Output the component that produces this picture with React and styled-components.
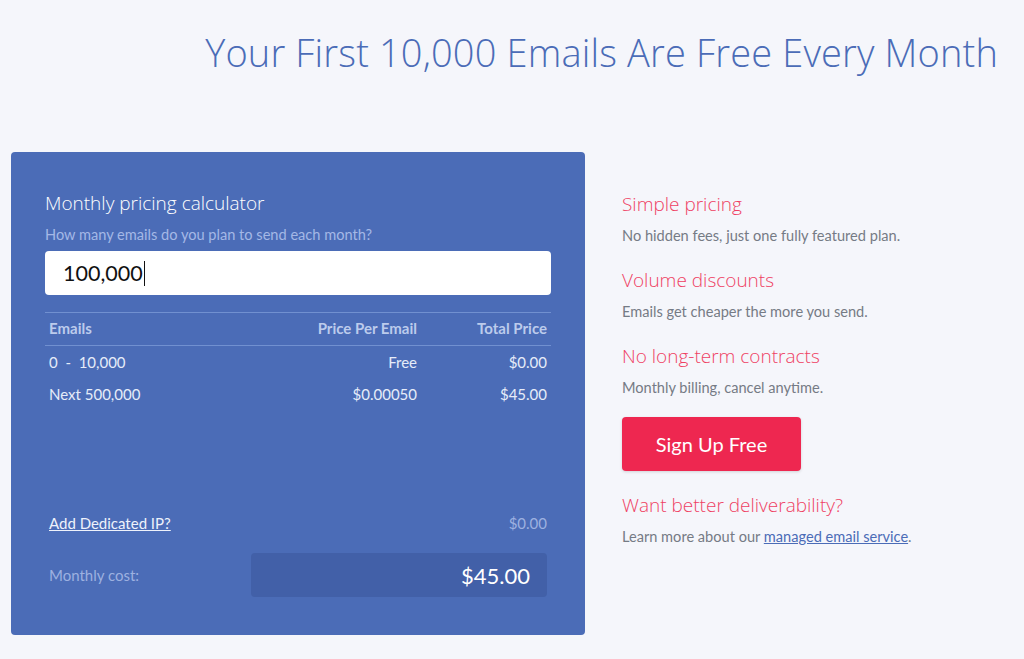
import React from "react";
import styled, { createGlobalStyle } from "styled-components";

const GlobalStyle = createGlobalStyle`
  body {
    margin: 0;
    background: #f5f6fb;
    font-family: "Lato", "Liberation Sans", sans-serif;
  }
`;

const rows = [
  { emails: "0  -  10,000", per: "Free", total: "$0.00" },
  { emails: "Next 500,000", per: "$0.00050", total: "$45.00" },
];

const features = [
  { title: "Simple pricing", text: "No hidden fees, just one fully featured plan." },
  { title: "Volume discounts", text: "Emails get cheaper the more you send." },
  { title: "No long-term contracts", text: "Monthly billing, cancel anytime." },
];

const App = () => {
  return (
    <Page>
      <GlobalStyle />
      <Title>Your First 10,000 Emails Are Free Every Month</Title>
      <Content>
        <Card>
          <CardTitle>Monthly pricing calculator</CardTitle>
          <Hint>How many emails do you plan to send each month?</Hint>
          <InputBox>
            100,000<Caret />
          </InputBox>
          <Table>
            <HeadCell>Emails</HeadCell>
            <HeadCell right>Price Per Email</HeadCell>
            <HeadCell right>Total Price</HeadCell>
            {rows.map((row, idx) => (
              <React.Fragment key={`row${idx}`}>
                <Cell>{row.emails}</Cell>
                <Cell right>{row.per}</Cell>
                <Cell right>{row.total}</Cell>
              </React.Fragment>
            ))}
          </Table>
          <Footer>
            <ExtraRow>
              <DedicatedLink href="#">Add Dedicated IP?</DedicatedLink>
              <Muted>$0.00</Muted>
            </ExtraRow>
            <CostRow>
              <Muted>Monthly cost:</Muted>
              <CostBox>$45.00</CostBox>
            </CostRow>
          </Footer>
        </Card>
        <Side>
          {features.map((f, idx) => (
            <Feature key={`f${idx}`}>
              <FeatureTitle>{f.title}</FeatureTitle>
              <FeatureText>{f.text}</FeatureText>
            </Feature>
          ))}
          <SignUp>Sign Up Free</SignUp>
          <Feature>
            <FeatureTitle>Want better deliverability?</FeatureTitle>
            <FeatureText>
              Learn more about our <TextLink href="#">managed email service</TextLink>.
            </FeatureText>
          </Feature>
        </Side>
      </Content>
    </Page>
  );
};

const Page = styled.div`
  width: 1024px;
  min-height: 659px;
  padding-top: 30px;
  box-sizing: border-box;
`;

const Title = styled.h1`
  margin: 0;
  padding-right: 26px;
  text-align: right;
  font-family: "Open Sans", sans-serif;
  font-weight: 300;
  font-size: 38px;
  line-height: 44px;
  letter-spacing: 0.15px;
  color: #4b6cb7;
`;

const Content = styled.div`
  display: flex;
  margin-top: 78px;
  padding-left: 11px;
`;

const Card = styled.div`
  width: 574px;
  height: 483px;
  box-sizing: border-box;
  padding: 38px 34px 38px 34px;
  background: #4b6cb7;
  border-radius: 4px;
  display: flex;
  flex-direction: column;
`;

const CardTitle = styled.div`
  font-family: "Open Sans", sans-serif;
  font-weight: 300;
  font-size: 19px;
  line-height: 26px;
  color: #ffffff;
`;

const Hint = styled.div`
  margin-top: 10px;
  font-size: 14.6px;
  line-height: 18px;
  color: #a4b8e6;
`;

const InputBox = styled.div`
  margin-top: 7px;
  height: 44px;
  background: #ffffff;
  border-radius: 4px;
  display: flex;
  align-items: center;
  padding-left: 18px;
  font-size: 21.5px;
  color: #111;
`;

const Caret = styled.span`
  display: inline-block;
  width: 1px;
  height: 25px;
  background: #111;
  margin-left: 1px;
`;

const Table = styled.div`
  margin-top: 17px;
  display: grid;
  grid-template-columns: 1fr 220px 130px;
  border-top: 1px solid #7190d0;
`;

const HeadCell = styled.div`
  padding: 6px 4px 7px;
  font-size: 15px;
  font-weight: 700;
  line-height: 19px;
  color: #bccbec;
  text-align: ${(props) => (props.right ? "right" : "left")};
  border-bottom: 1px solid #7190d0;
`;

const Cell = styled.div`
  padding: 6px 4px 6px;
  font-size: 15px;
  line-height: 20px;
  color: #e6ecf9;
  white-space: pre;
  text-align: ${(props) => (props.right ? "right" : "left")};
`;

const Footer = styled.div`
  margin-top: auto;
  display: flex;
  flex-direction: column;
  padding: 0 4px;
`;

const ExtraRow = styled.div`
  display: flex;
  justify-content: space-between;
  align-items: center;
  height: 20px;
`;

const DedicatedLink = styled.a`
  font-size: 15px;
  color: #eef2fb;
  text-decoration: underline;
`;

const Muted = styled.span`
  font-size: 15px;
  color: #9db1e0;
`;

const CostRow = styled.div`
  margin-top: 20px;
  display: flex;
  justify-content: space-between;
  align-items: center;
`;

const CostBox = styled.div`
  width: 296px;
  height: 44px;
  box-sizing: border-box;
  padding-right: 17px;
  background: #4260a8;
  border-radius: 4px;
  display: flex;
  align-items: center;
  justify-content: flex-end;
  font-size: 22px;
  color: #ffffff;
`;

const Side = styled.div`
  margin-left: 37px;
  padding-top: 37px;
  display: flex;
  flex-direction: column;
`;

const Feature = styled.div`
  margin-bottom: 20px;
`;

const FeatureTitle = styled.div`
  font-family: "Open Sans", sans-serif;
  font-weight: 300;
  font-size: 19px;
  line-height: 30px;
  color: #ef3f63;
`;

const FeatureText = styled.div`
  margin-top: 8px;
  font-size: 14.6px;
  line-height: 18px;
  color: #757b85;
`;

const TextLink = styled.a`
  color: #4b6cb7;
  text-decoration: underline;
`;

const SignUp = styled.button`
  width: 179px;
  height: 54px;
  margin-bottom: 19px;
  border: none;
  border-radius: 4px;
  background: #ee2750;
  color: #ffffff;
  font-family: "Lato", sans-serif;
  font-size: 20px;
  box-shadow: 0 1px 3px rgba(0, 0, 0, 0.15);
  cursor: pointer;
`;

export default App;
